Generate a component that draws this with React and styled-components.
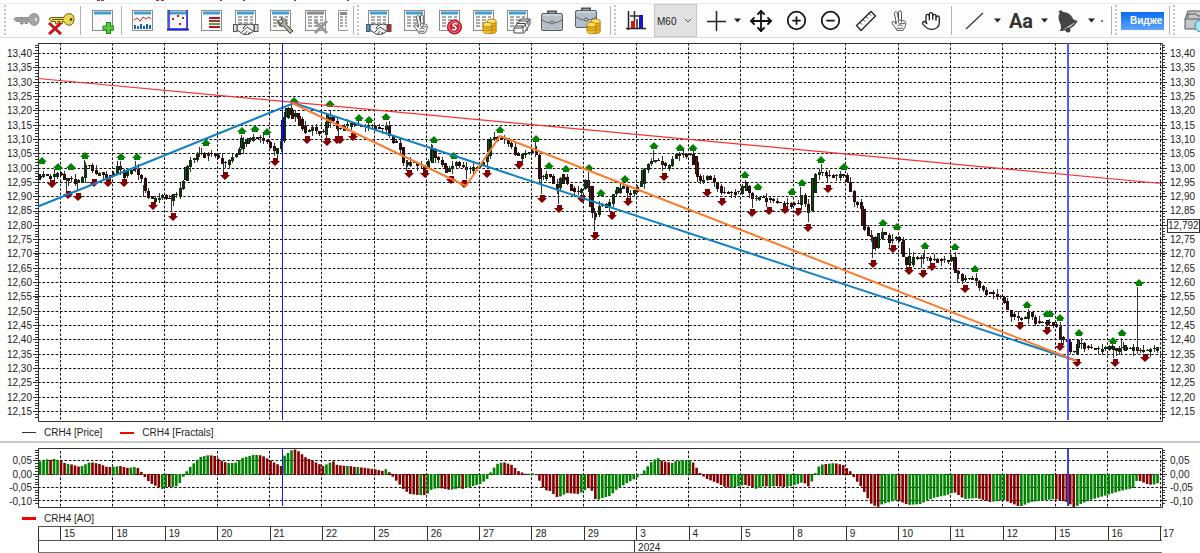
import React from 'react'
import styled, { createGlobalStyle } from 'styled-components'
import { Move, CirclePlus, CircleMinus, Hand } from 'lucide-react'

const GlobalStyle = createGlobalStyle`
  * {
    box-sizing: border-box;
  }
  body {
    margin: 0;
    background: #fff;
    color: #222;
    font-family: 'Liberation Sans', Arial, sans-serif;
    font-size: 10px;
    overflow-x: hidden;
  }
`

const Page = styled.main`
  display: flex;
  flex-direction: column;
`
const TopEdge = styled.div`
  height: 4px;
  border-bottom: 1px solid #ececec;

  svg {
    display: block;
  }
`
const Toolbar = styled.header`
  display: flex;
  align-items: stretch;
  height: 34px;
  padding-left: 4px;
  border-bottom: 1px solid #dcdcdc;
  background: #fdfdfd;
  overflow: hidden;
`
const Handle = styled.span`
  flex: none;
  width: 3px;
  margin: 1px 0;
  background: repeating-linear-gradient(#c4c4c4 0 2px, transparent 2px 4px) 0 0 / 2px 100% no-repeat;
`
const Divider = styled.span`
  flex: none;
  width: 1px;
  margin: 2px 3px;
  background: #b4b4b4;
`
const ToolButton = styled.button`
  flex: none;
  display: flex;
  align-items: center;
  justify-content: ${({ $start }) => ($start ? 'flex-start' : 'center')};
  width: ${({ $w }) => $w}px;
  padding: 0;
  border: 0;
  background: none;
  color: #222;
  overflow: hidden;

  svg {
    flex: none;
  }
`
const TextTool = styled(ToolButton)`
  font-family: Roboto, 'Liberation Sans', sans-serif;
  font-weight: 700;
  font-size: 20px;
  color: #333;
`
const PeriodBox = styled.label`
  flex: none;
  display: flex;
  align-items: center;
  position: relative;
  width: 43px;
  border: 1px solid #c6c6c6;
  background: #e1e1e1;

  svg {
    position: absolute;
    right: 4px;
    pointer-events: none;
  }
`
const PeriodSelect = styled.select`
  appearance: none;
  width: 100%;
  height: 100%;
  padding: 2px 0 0 2px;
  border: 0;
  background: none;
  color: #222;
  font: inherit;
`
const WidgetButton = styled.button`
  flex: none;
  align-self: center;
  width: 43px;
  height: 18px;
  margin: 0 2px 0 3px;
  padding: 0 0 0 9px;
  border: 0;
  background: linear-gradient(#0a6cf0, #5fa4fb);
  color: #fff;
  font-family: 'Liberation Sans', Arial, sans-serif;
  font-weight: 700;
  font-size: 10px;
  line-height: 12px;
  text-align: left;
  white-space: nowrap;
`

const Panel = styled.section`
  display: grid;
  grid-template-columns: 33px minmax(0, 1fr) 33px;
  padding-top: 5px;
`
const PlotSvg = styled.svg`
  display: block;
  width: 100%;
  height: ${({ $h }) => $h}px;
`
const Scale = styled.div`
  display: flex;
  flex-direction: column;
  justify-content: space-between;
  padding: ${({ $pad }) => $pad};
  text-align: ${({ $side }) => $side};
  line-height: ${({ $line }) => $line}px;
  white-space: nowrap;
`
const LastPrice = styled.span`
  margin-left: -3px;
  border: 1px solid #333;
  background: #fff;
  line-height: 12px;
`
const Legend = styled.div`
  display: flex;
  align-items: center;
  gap: 8px;
  height: ${({ $h }) => $h}px;
  padding: 2px 0 0 22px;
`
const LegendItem = styled.span`
  display: flex;
  align-items: center;
  gap: 8px;
  margin-right: 10px;
`
const Swatch = styled.span`
  width: 14px;
  height: ${({ $weight }) => $weight}px;
  background: ${({ $color }) => $color};
`
const Splitter = styled.hr`
  width: 100%;
  height: 2px;
  margin: 0;
  border: 0;
  background: #c9c9c9;
`
const TimeAxis = styled.div`
  display: flex;
  flex-direction: column;
`
const TimeRow = styled.div`
  display: flex;
  height: ${({ $h }) => $h}px;
  line-height: 13px;

  > :first-child {
    margin-left: 38px;
    border-left: 1px solid #333;
  }
`
const Cell = styled.span`
  flex: ${({ $grow }) => ($grow ? `${$grow} 1 0` : 'none')};
  width: ${({ $w }) => ($w ? `${$w}px` : 'auto')};
  padding-left: ${({ $plain }) => ($plain ? 0 : 3)}px;
  border-top: 1px solid #555;
  border-left: ${({ $plain, $edge }) => ($plain && !$edge ? '0' : '1px solid #333')};
`
const AfterAxis = styled.span`
  width: 38px;
  padding: 1px 0 0 1px;
`
const BottomLine = styled.div`
  height: 1px;
  margin: 0 38px;
  background: #777;
`

/* ---------- data ---------- */

const prices = Array.from({ length: 26 }, (_, i) => ((1340 - i * 5) / 100).toFixed(2).replace('.', ','))
const aoMarks = ['0,05', '0,00', '-0,05', '-0,10']
const days = [15, 18, 19, 20, 21, 22, 25, 26, 27, 28, 29, 3, 4, 5, 8, 9, 10, 11, 12, 15, 16]
const dayX = i => 60 + (i * 1100) / 21
const BAR = 1100 / 21 / 15

// closing path, x y pairs
const closes = `39,178 42,173 45,176 50,177 56,173 61,174 64,180 70,177 74,183 78,180 82,177 84,166 88,164 91,167 94,174
100,173 106,175 112,176 117,166 120,170 124,176 128,170 134,169 138,175 141,176 143,188 148,196 152,199 158,198 164,194 168,204
171,192 175,196 180,187 184,180 186,167 190,160 194,158 199,152 203,155 208,153 214,154 218,158 223,164 228,160 233,156 238,152
242,142 247,140 252,137 258,137 264,140 270,145 274,151 278,147 281,141 283,120 286,114 288,108 290,116 295,113 299,120 303,128
307,134 311,126 316,131 322,131 325,134 327,116 330,117 334,122 338,131 343,127 348,123 355,124 362,126 370,125 378,128 384,129
386,126 390,138 395,143 399,144 402,158 405,167 410,162 418,164 425,167 428,160 431,149 434,157 440,161 446,170 452,166 456,162
462,167 468,168 476,167 483,163 487,154 489,140 494,137 500,138 505,138 508,143 512,148 517,157 522,154 530,152 535,150 537,162
540,181 545,173 550,176 556,190 560,178 563,176 568,185 573,191 580,193 584,180 588,182 590,210 594,218 597,208 601,203 607,208
612,195 616,190 624,186 628,197 634,190 640,184 643,170 648,164 652,160 657,160 662,163 665,166 670,164 674,154 680,154 690,154
694,165 697,178 702,183 706,176 710,178 716,184 721,192 728,192 738,192 744,183 748,192 752,198 760,197 770,199 778,203 786,203
795,203 798,204 801,194 804,200 807,214 810,207 812,188 815,174 820,171 826,175 836,175 842,173 846,181 850,190 853,202 858,202
861,210 864,227 868,236 873,237 875,250 878,237 881,232 885,235 889,241 895,237 899,240 902,256 908,266 912,256 918,259 925,257
932,259 940,259 948,261 952,256 954,270 958,274 963,279 968,278 974,278 978,284 984,292 990,292 995,295 1003,298 1006,308
1012,315 1018,318 1023,319 1028,312 1034,320 1040,323 1048,322 1054,324 1057,328 1060,338 1066,340 1069,350 1073,353 1076,350
1078,340 1082,345 1090,348 1100,349 1110,346 1115,351 1120,347 1126,348 1134,347 1138,352 1145,350 1152,349 1160,346`

// long shadows, x top bottom
const shadows = `66,178,191 77,180,191 84,160,175 120,161,175 135,161,172 143,185,197 171,195,212 199,147,157 223,163,172
241,135,150 274,148,156 291,103,115 326,113,138 330,110,124 338,128,136 386,122,132 406,160,171 432,145,162 466,162,179 535,142,157
541,175,194 558,185,204 588,172,192 594,208,231 653,150,162 662,163,171 745,180,191 752,196,208 800,187,202 808,208,222 827,173,183
821,164,173 872,236,258 882,228,236 909,248,268 921,255,268 924,250,258 957,270,283 1018,312,321 1061,325,343 1113,346,358
1121,338,355 1137,287,350 1140,348,353`

const bigBodies = `39,174,180,r 103,172,175,r 185,167,180,g 241,138,148,g 248,138,144,g 286,108,117,g 292,110,119,r 299,116,126,r
327,115,128,g 432,150,163,g 446,166,173,r 488,140,152,g 540,168,179,r 563,174,184,r 590,186,207,r 617,187,193,g 642,170,181,g
696,156,174,r 746,182,191,g 812,178,203,g 862,206,226,r 874,237,249,r 878,233,248,g 902,242,254,r 909,256,265,g 954,257,270,r
1047,320,325,r 1078,340,348,g 1113,346,350,g 1125,345,351,g`

const ups = `42,161 58,167 71,167 85,156 121,157 137,157 206,143 242,131 255,129 267,132 294,101 330,104 359,118 369,120 386,117
434,140 454,156 500,130 536,139 549,166 566,169 589,168 601,193 625,179 654,146 680,148 693,148 745,175 758,187 792,192 802,183
821,160 844,167 883,223 897,227 925,246 955,247 975,269 1027,305 1047,314 1050,314 1060,318 1079,333 1113,341 1122,333 1139,283`

const downs = `52,184 68,195 78,197 94,183 108,183 124,183 153,206 173,217 225,176 275,162 307,140 327,142 337,140 340,140 353,137
409,174 425,174 451,180 464,184 487,174 519,165 542,199 559,209 582,199 595,236 612,216 628,202 664,177 707,193 722,202 752,213
769,211 785,210 798,212 808,228 828,189 873,264 893,249 909,271 923,274 932,267 965,289 1020,326 1047,331 1060,347 1077,363
1115,363 1145,358`

// oscillator envelope: x, y, colour of the run that ends there
const ao = `38,462,g 48,459,g 51,460,r 54,459,g 57,460,r 60,460,g 66,464,r 70,464,g 80,467,r 90,462,g 100,464,r 107,467,r 112,467,r
120,466,g 128,468,r 135,467,g 138,468,r 143,474,r 150,482,r 162,488,r 166,486,g 172,486,r 178,485,g 183,476,g 190,467,g 200,457,g
209,455,g 215,456,r 220,460,r 227,463,r 235,463,g 242,458,g 253,455,g 259,455,g 263,456,r 273,462,r 281,466,r 284,456,g 293,449,g
297,450,r 305,457,r 313,461,r 323,466,r 333,461,g 337,465,r 347,466,r 350,466,g 355,467,r 358,467,g 373,469,r 383,471,r 386,469,g
389,472,r 393,476,r 400,484,r 404,489,r 410,493,r 418,494,r 423,494,g 426,494,r 432,488,g 440,487,g 450,489,r 460,487,g 463,488,r
480,483,g 487,478,g 492,470,g 497,464,g 503,462,g 506,463,r 512,465,r 518,471,r 526,474,r 535,473,g 538,477,r 544,489,r 550,490,r
558,497,r 561,495,g 567,492,g 579,493,r 588,487,g 592,490,r 595,498,r 598,499,r 602,497,g 610,495,g 617,488,g 627,482,g 638,476,g
642,473,g 647,467,g 653,460,g 659,458,g 662,461,r 672,463,r 676,461,g 684,460,g 686,460,r 690,460,g 692,461,r 700,473,r 707,478,r
717,482,r 725,486,r 731,487,r 744,484,g 747,484,r 755,488,r 765,485,g 769,486,r 775,485,g 784,486,r 792,485,g 803,481,g 809,486,r
813,478,g 818,467,g 823,464,g 827,464,r 834,463,g 843,465,r 850,471,r 855,478,r 862,487,r 868,498,r 872,504,r 879,506,r 882,503,g
897,499,g 908,504,r 920,503,g 922,503,r 924,501,g 933,497,g 947,494,g 954,491,g 957,493,r 964,498,r 977,497,g 990,501,r 1004,499,g
1018,505,r 1022,505,g 1030,501,g 1055,498,g 1067,501,r 1075,507,r 1078,504,g 1090,499,g 1107,494,g 1120,490,g 1133,487,g 1137,479,g
1140,480,r 1147,483,r 1152,484,r 1162,481,g`

const parse = text => text.trim().split(/\s+/).map(item => item.split(',').map(v => (isNaN(v) ? v : Number(v))))

const valueAt = (points, x) => {
  const next = points.findIndex(p => p[0] >= x)
  if (next <= 0) return [points[0][1], points[0][2]]
  const a = points[next - 1]
  const b = points[next]
  return [a[1] + ((b[1] - a[1]) * (x - a[0])) / (b[0] - a[0]), b[2]]
}

const GREEN = '#008200'
const RED = '#840000'
const closePoints = parse(closes)
const aoPoints = parse(ao)
const barXs = Array.from({ length: 321 }, (_, i) => 40 + i * BAR)

const candles = barXs.map((x, i) => {
  const open = valueAt(closePoints, Math.max(39, x - BAR))[0]
  const close = valueAt(closePoints, x)[0]
  const extra = [0, 2, 1, 0, 3, 1, 0][(i * 5) % 7]
  const top = Math.round(Math.min(open, close))
  return {
    x: Math.round(x),
    top,
    bottom: Math.max(Math.round(Math.max(open, close)), top + 1) + extra,
    high: [1, 3, 0, 2, 5, 1][(i * 7) % 6],
    low: [2, 0, 3, 1, 5][(i * 3) % 5],
    up: close < open
  }
})

/* ---------- charts ---------- */

const Grid = ({ rows, top, bottom }) => (
  <g stroke="#111" strokeWidth="1" strokeDasharray="2.6 1.8">
    {rows.map(y => <line key={y} x1="38" x2="1162" y1={y} y2={y} />)}
    {[...days, 17].map((d, i) => {
      const x = Math.floor(dayX(i)) + 0.5
      return <line key={i} x1={x} x2={x} y1={top} y2={bottom} />
    })}
  </g>
)

const Ticks = ({ rows, minor }) => (
  <g stroke="#333" strokeWidth="1" shapeRendering="crispEdges">
    {rows.map(y => <path key={y} d={`M33 ${y}H38M1162 ${y}H1168`} />)}
    {minor.map(y => <path key={y} d={`M35 ${y}H38M1162 ${y}H1165`} />)}
  </g>
)

const priceRows = prices.map((_, i) => Math.round(53 + i * 14.32) + 0.5)
const priceMinor = Array.from({ length: 131 }, (_, i) => 45 + i * 2.864)
const aoRows = [460.5, 474.5, 487.5, 500.5]
const aoMinor = Array.from({ length: 21 }, (_, i) => 450 + i * 2.68)

const PriceChart = () => (
  <PlotSvg $h={379} viewBox="33 43 1134 379" preserveAspectRatio="none" role="img" aria-label="CRH4 Price">
    <Grid rows={priceRows} top={43} bottom={421} />
    <Ticks rows={priceRows} minor={priceMinor} />
    <path d="M38.5 43V421.5H1162.5V43.5H38.5" fill="none" stroke="#333" />
    <g shapeRendering="crispEdges">
      {candles.map((c, i) => (
        <g key={i}>
          <rect x={c.x} y={c.top - c.high} width="1" height={c.bottom - c.top + c.high + c.low} fill="#333" />
          <rect x={c.x - 1} y={c.top} width="3" height={c.bottom - c.top} fill={c.up ? '#12300f' : '#2c0c0c'} />
        </g>
      ))}
      {parse(shadows).map(([x, a, b]) => <rect key={x} x={x} y={a} width="1" height={b - a} fill="#333" />)}
      {parse(bigBodies).map(([x, a, b, c]) => (
        <g key={x}>
          <rect x={x - 1} y={a} width="3" height={b - a} fill="#111" />
          <rect x={x} y={a + 1} width="1" height={b - a - 2} fill={c === 'g' ? '#0a6a0a' : '#7a0a0a'} />
        </g>
      ))}
      <rect x="281" y="120" width="3" height="21" fill="#000090" />
      <rect x="1067" y="339" width="3" height="12" fill="#000090" />
    </g>
    {parse(ups).map(([x, y]) => <path key={`${x}u`} d={`M${x} ${y - 4}l5 5h-2v2h-6v-2h-2z`} fill={GREEN} />)}
    {parse(downs).map(([x, y]) => <path key={`${x}d`} d={`M${x} ${y + 4}l5 -5h-2v-3h-5v3h-3z`} fill={RED} />)}
    <g fill="none">
      <path d="M38 78.5L1162 183.5" stroke="#ff3030" strokeWidth="1.2" />
      <path d="M38 206.5L294 103L1077 361" stroke="#1280c4" strokeWidth="2" />
      <path d="M292 103L466 186L500 136L1077 361" stroke="#ff7a2e" strokeWidth="2" />
    </g>
    <path d="M282.5 43V420" stroke="#1414ff" />
    <path d="M1068 43V420" stroke="#5858ff" strokeWidth="2" />
  </PlotSvg>
)

const AoChart = () => (
  <PlotSvg $h={60} viewBox="33 448 1134 60" preserveAspectRatio="none" role="img" aria-label="CRH4 AO">
    <Grid rows={aoRows} top={451} bottom={507} />
    <Ticks rows={aoRows} minor={aoMinor} />
    {barXs.map((x, i) => {
      const [y, c] = valueAt(aoPoints, x)
      const top = Math.min(y, 474)
      return <rect key={i} x={x - 1.2} y={top} width="2.6" height={Math.max(1, Math.abs(y - 474) + 1)} fill={c === 'g' ? GREEN : RED} />
    })}
    <path d="M38.5 448.5H1162.5V507.5H38.5z" fill="none" stroke="#333" />
    <path d="M282.5 449V506" stroke="#1414ff" />
    <path d="M1068 449V506" stroke="#4040e0" strokeWidth="2" />
  </PlotSvg>
)

/* ---------- toolbar icons ---------- */

const Icon = ({ w = 26, h = 28, children }) => (
  <svg width={w} height={h} viewBox={`0 0 ${w} ${h}`} fill="none" aria-hidden="true">{children}</svg>
)

const Sheet = ({ head = '#3c9fd0', rows = true }) => (
  <>
    <rect x="2.5" y="3.5" width="20" height="20" fill="#fafafa" stroke="#8c8c8c" />
    <path d="M4 6H21" stroke={head} strokeWidth="3" />
    {rows && <path d="M5 10H9M11 10H15M17 10H20M5 13H9M11 13H15M17 13H20M5 16H9M11 16H15M17 16H20M5 19H9M11 19H15M17 19H20" stroke="#a8a8a8" strokeWidth="2" />}
  </>
)

const KeyIcon = ({ fill, edge, hole }) => (
  <>
    <path d="M2 10L4 8.500H17C18 5 21 4 24 5C28 6 28 14 24 16C21 17 18 15 17 12.500H15.500v2h-2.500v-2h-2v2.500H8.500V12.500H4z" fill={fill} stroke={edge} />
    <circle cx="24" cy="10.500" r="1.300" fill={hole} />
    <path d="M5 10.500H17" stroke={edge} />
  </>
)

const Shake = ({ left = '#ddd', right = '#ddd' }) => (
  <g strokeWidth="1">
    <path d="M4 18l5-1 4 1 4-1 4 1v6l-3 2-4 2-4-1-6-4z" fill="#f2f2f2" stroke="#444" />
    <path d="M13 18l-3 3c1 2 3 1 4-1l6 4M9 25l2-2M12 27l2-3M15 27l2-2" stroke="#444" />
    <rect x="0.500" y="17.500" width="3.500" height="7" fill={left} stroke="#555" />
    <rect x="21.500" y="17.500" width="3.500" height="7" fill={right} stroke="#555" />
  </g>
)

const Coins = () => (
  <g transform="translate(12 11) scale(1.1)" stroke="#a87400" strokeWidth="0.700">
    <path d="M4 3v9c0 3 8 3 8 0V3" fill="#eeb01c" />
    <path d="M0 6v6c0 3 8 3 8 0V6" fill="#f7c52e" />
    <ellipse cx="8" cy="3" rx="4" ry="2" fill="#ffe066" />
    <ellipse cx="4" cy="6" rx="4" ry="2" fill="#ffe066" />
    <path d="M0 8c0 2 8 2 8 0M0 10c0 2 8 2 8 0M8 8c2 0 4-1 4-2M8 11c2 0 4-1 4-2" />
  </g>
)

const Case = () => (
  <>
    <path d="M9 7V4.500h8V7" stroke="#555" strokeWidth="2" />
    <rect x="2.500" y="6.500" width="21" height="17" rx="1.500" fill="#b4bfc7" stroke="#56606a" />
    <path d="M3 13c6 4 14 4 20 0" stroke="#56606a" />
    <path d="M4 8H22" stroke="#dde4e8" />
    <circle cx="13" cy="15.500" r="1.500" fill="#eee" stroke="#444" />
  </>
)

const VictoryHand = () => (
  <g fill="#fff" stroke="#333" strokeLinejoin="round">
    <path d="M7 13L5 4c0-2 3-3 3.500-.5L10 11V2.500c0-2 3.500-2 3.500 0V12l3 1c1.500 0 2 1 2 2.500 0 4-1.500 6-3.500 8.500H8c-1-3-4-5.500-5.500-8.500C2 14 3 13 4.500 13.500L7 16z" />
    <path d="M7 13v4M10 12c2-1 3.500 0 3.500 2.500s-3.500 2-3.500 0zM13.500 16h4M9 19c2-2 4-2 6 0M8 21.500h7" />
  </g>
)

const Caret = ({ label }) => (
  <ToolButton $w={9} aria-label={label}>
    <Icon w={7} h={5}><path d="M0 0.500H7L3.500 4.500z" fill="#222" /></Icon>
  </ToolButton>
)

const firstTools = [
  { label: 'Chart', w: 36, icon: <><Sheet rows={false} /><path d="M4 13l3-2 3 3 3-4 3 2 3-2 2 2" stroke="#d22" /><path d="M5 22v-4M8 22v-3M11 22v-5M14 22v-3M17 22v-5M20 22v-4" stroke="#2060c0" strokeWidth="2" /></> },
  { label: 'Scatter', w: 34, icon: <><Sheet rows={false} /><path d="M4 3V22H22V3M2 22.500H24" stroke="#2020e0" strokeWidth="1.500" /><path d="M7 12h2M12 9h2M17 11h2M14 17h2" stroke="#e01010" strokeWidth="2" /></> },
  { label: 'Order book', w: 34, icon: <><Sheet rows={false} /><path d="M10 11H21M10 20H21" stroke="#c01020" strokeWidth="2" /><path d="M10 14H21M10 17H21" stroke="#208020" strokeWidth="1.500" /><path d="M10 14H21" stroke="#c01020" strokeWidth="1.500" /></> },
  { label: 'Deals', w: 34, icon: <><Sheet /><Shake /></> },
  { label: 'Settings', w: 36, icon: <><Sheet /><path d="M10 13c-1 4 2 7 5.500 6l6.500 7.500 3-2.500-7-7c1-3-1-6-5-6l2 4-2.500 2.500z" fill="#b4b29c" stroke="#444" /></> },
  { label: 'Delete table', w: 33, icon: <><Sheet head="#888" /><path d="M12 14L24 26M24 14L12 26" stroke="#999" strokeWidth="3" /></> }
]
const secondTools = [
  { label: 'My deals', w: 37, icon: <><Sheet /><Shake left="#38a0d8" right="#c82020" /></> },
  { label: 'Orders', w: 36, icon: <><Sheet /><g transform="translate(10.500 7) scale(.8)"><VictoryHand /></g></> },
  { label: 'Stop orders', w: 33, icon: <><Sheet /><circle cx="17.500" cy="20" r="7" fill="#d22030" stroke="#a01020" /><circle cx="17.500" cy="20" r="5.500" stroke="#f6b0b4" strokeWidth="0.700" /><path d="M20 17.500c-2-2-5 0-3.500 1.500l2 1c2 1.500-1 4-3.500 2" stroke="#fff" strokeWidth="1.500" /></> },
  { label: 'Limits', w: 35, icon: <><Sheet /><Coins /></> },
  { label: 'Trades', w: 34, icon: <><Sheet /><path d="M16 12h9v5l-6 9H9v-5z" fill="#fff" stroke="#444" /><path d="M9 21h8l8-9M10 19h8v6M12 16.500h8l1 4M14 14h9v4" stroke="#444" /></> },
  { label: 'Portfolio', w: 33, icon: <Case /> },
  { label: 'Client portfolio', w: 39, icon: <><g transform="translate(-2 -3)"><Case /></g><Coins /></> }
]

const App = () => (
  <Page>
    <GlobalStyle />
    <TopEdge>
      <svg width="400" height="3" aria-hidden="true">
        <path d="M97 0.500h3M101 0.500h3M156 0.500h3M161 0.500h3M220 0.500h2M243 0.500h2M294 0.500h2M347 0.500h2" stroke="#a03060" />
      </svg>
    </TopEdge>
    <Toolbar>
      <Handle />
      <ToolButton $w={38} aria-label="Connect"><Icon w={29}><g transform="translate(0 2)"><KeyIcon fill="#a4a4a4" edge="#8c8c8c" hole="#eee" /></g></Icon></ToolButton>
      <ToolButton $w={32} aria-label="Disconnect">
        <Icon w={29}><g transform="translate(0 2)"><KeyIcon fill="#ecd94c" edge="#6a5a10" hole="#222" /></g><path d="M2 16L14 27M14 16L2 27" stroke="#c81420" strokeWidth="3" /></Icon>
      </ToolButton>
      <Divider />
      <ToolButton $w={34} aria-label="New window">
        <Icon><g transform="translate(2 0)"><Sheet rows={false} /><path d="M18.500 15v12M12.500 21h12" stroke="#188a10" strokeWidth="5" /><path d="M18.500 16v10M13.500 21h10" stroke="#58c83c" strokeWidth="3" /></g></Icon>
      </ToolButton>
      <Divider />
      {firstTools.map(t => <ToolButton key={t.label} $w={t.w} aria-label={t.label}><Icon>{t.icon}</Icon></ToolButton>)}
      <ToolButton $w={18} $start aria-label="More tables">
        <Icon w={16}><path d="M6.500 23.500V3.500H16M6.500 23.500H16" stroke="#999" /><path d="M8 6.500H15" stroke="#888" strokeWidth="3" /><path d="M8 10H11M13 10H15M8 13H11M13 13H15M8 16H11M13 16H15M8 19H11M13 19H15" stroke="#aaa" strokeWidth="2" /></Icon>
      </ToolButton>
      <Divider />
      <Handle />
      {secondTools.map(t => <ToolButton key={t.label} $w={t.w} aria-label={t.label}><Icon>{t.icon}</Icon></ToolButton>)}
      <Divider />
      <Handle />
      <ToolButton $w={37} aria-label="Indicators">
        <Icon w={22}><path d="M3.500 4V23M1 21.500H21" stroke="#222" strokeWidth="1.500" /><path d="M8 21v-7" stroke="#e01010" strokeWidth="4" /><path d="M12 21v-9" stroke="#222" strokeWidth="1.500" /><path d="M16 21V8" stroke="#1414d8" strokeWidth="4" /><path d="M5 9h9M9.500 4v10" stroke="#333" strokeWidth="1.500" /></Icon>
      </ToolButton>
      <PeriodBox>
        <PeriodSelect aria-label="Period" defaultValue="M60">
          <option>M60</option>
        </PeriodSelect>
        <Icon w={8} h={6}><path d="M1 1l3 3 3-3" stroke="#555" /></Icon>
      </PeriodBox>
      <ToolButton $w={36} aria-label="Crosshair"><Icon w={22} h={22}><path d="M3 11.500H22M12.500 1V21" stroke="#222" strokeWidth="1.500" /></Icon></ToolButton>
      <Caret label="Crosshair options" />
      <ToolButton $w={38} aria-label="Move"><Move size={24} strokeWidth={1.8} color="#111" /></ToolButton>
      <ToolButton $w={32} aria-label="Zoom in"><CirclePlus size={21} strokeWidth={2} color="#111" /></ToolButton>
      <ToolButton $w={36} aria-label="Zoom out"><CircleMinus size={21} strokeWidth={2} color="#111" /></ToolButton>
      <ToolButton $w={36} aria-label="Measure">
        <Icon w={22} h={22}><path d="M1.500 15.500L16 1.500l4.500 4.500L6 20.500z" stroke="#222" strokeWidth="1.300" /><path d="M5 12.500l2 2M8 9.500l2 2M11 6.500l2 2M14 3.500l2 2" stroke="#222" /></Icon>
      </ToolButton>
      <ToolButton $w={30} aria-label="Select"><Icon w={20}><g transform="translate(1 3) scale(.85)"><VictoryHand /></g></Icon></ToolButton>
      <ToolButton $w={34} aria-label="Pan"><Hand size={20} strokeWidth={1.6} color="#222" /></ToolButton>
      <Divider />
      <ToolButton $w={38} aria-label="Line"><Icon w={20} h={20}><path d="M2 18L19 2" stroke="#333" strokeWidth="1.200" /></Icon></ToolButton>
      <Caret label="Line options" />
      <TextTool $w={38}>Aa</TextTool>
      <Caret label="Text options" />
      <ToolButton $w={38} aria-label="Alert">
        <Icon w={22} h={24}><path d="M1 3l3-2 2 2c6 0 9 4 10 7l4 2-16 10c0-4 0-6-1-8-2-4-2-8 0-10z" fill="#444" /><path d="M3 21c6 1 13-3 17-9" stroke="#444" strokeWidth="1.500" /><circle cx="11" cy="21" r="2.500" fill="#444" /></Icon>
      </ToolButton>
      <Caret label="Alert options" />
      <ToolButton $w={12} aria-label="More"><Icon w={4} h={4}><circle cx="2" cy="2" r="1" fill="#444" /></Icon></ToolButton>
      <Divider />
      <Handle />
      <WidgetButton>Видже</WidgetButton>
      <Divider />
      <Handle />
      <ToolButton $w={40} aria-label="Open">
        <Icon w={28}><path d="M3 12l3-8h14v5h6v13H3z" fill="#c4c8ca" stroke="#555" /><path d="M6 11V7h8l2 2h8M3 12h16l-3 10" stroke="#555" /><circle cx="19" cy="19" r="6" fill="#a8e4f4" stroke="#3888a0" /></Icon>
      </ToolButton>
    </Toolbar>

    <Panel>
      <Scale $side="right" $line={14} $pad="4px 1px 3px 0">
        {prices.map(p => <span key={p}>{p}</span>)}
      </Scale>
      <PriceChart />
      <Scale $side="left" $line={14} $pad="4px 0 3px 3px">
        {prices.map(p => (p === '12,80' ? <LastPrice key={p}>12,792</LastPrice> : <span key={p}>{p}</span>))}
      </Scale>
    </Panel>
    <Legend $h={19}>
      <LegendItem><Swatch $weight={1} $color="#333" />CRH4 [Price]</LegendItem>
      <LegendItem><Swatch $weight={2} $color="#f00" />CRH4 [Fractals]</LegendItem>
    </Legend>
    <Splitter />

    <Panel>
      <Scale $side="right" $line={13} $pad="6px 1px 0 0">
        {aoMarks.map(m => <span key={m}>{m}</span>)}
      </Scale>
      <AoChart />
      <Scale $side="left" $line={13} $pad="6px 0 0 3px">
        {aoMarks.map(m => <span key={m}>{m}</span>)}
      </Scale>
    </Panel>
    <Legend $h={18}>
      <LegendItem><Swatch $weight={3} $color="#f00" />CRH4 [AO]</LegendItem>
    </Legend>

    <TimeAxis>
      <TimeRow $h={14}>
        <Cell $plain $w={22} />
        {days.map((d, i) => <Cell key={i} $grow={1}>{d}</Cell>)}
        <Cell $w={2} $plain $edge />
        <AfterAxis>17</AfterAxis>
      </TimeRow>
      <TimeRow $h={12}>
        <Cell $plain $w={22} />
        <Cell $plain $grow={11} />
        <Cell $grow={10}>2024</Cell>
        <Cell $w={2} $plain />
        <AfterAxis />
      </TimeRow>
      <BottomLine />
    </TimeAxis>
  </Page>
)

export default App
